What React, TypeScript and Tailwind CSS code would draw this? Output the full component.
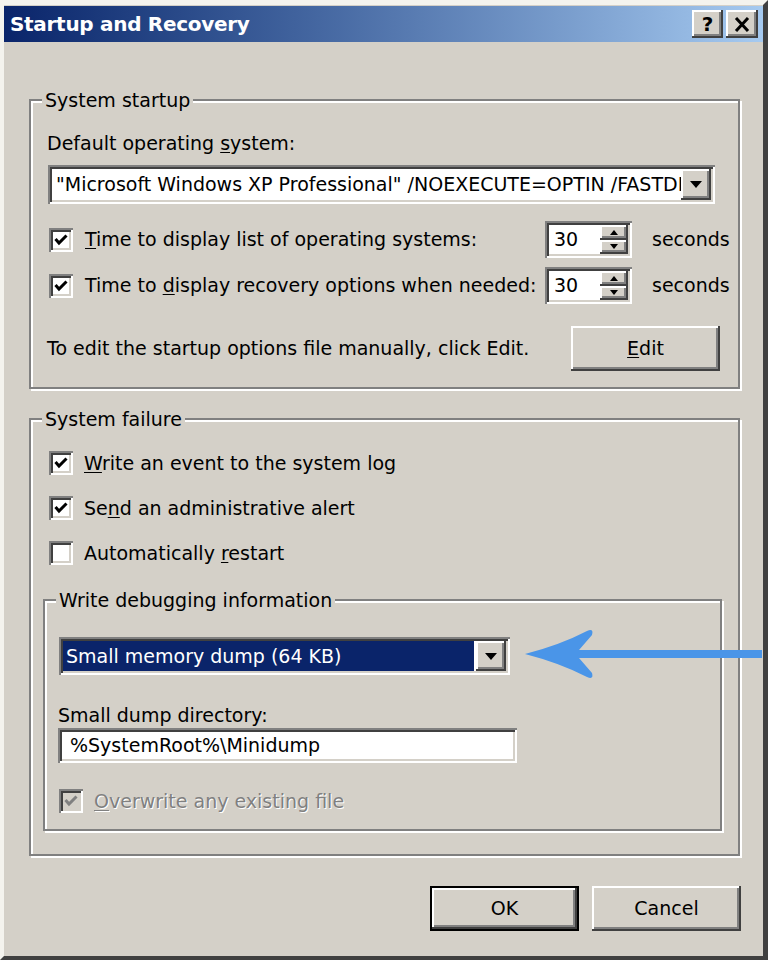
import type { ReactNode } from "react";

const raised =
  "bg-[#d4d0c8] shadow-[inset_-2px_-2px_0_#404040,inset_2px_2px_0_#ffffff,inset_-4px_-4px_0_#808080,inset_4px_4px_0_#d4d0c8]";
const sunken =
  "shadow-[inset_2px_2px_0_#808080,inset_-2px_-2px_0_#ffffff,inset_4px_4px_0_#404040,inset_-4px_-4px_0_#d4d0c8]";

function Group({
  label,
  className,
  children,
}: {
  label: string;
  className: string;
  children: ReactNode;
}) {
  return (
    <div
      className={`flex flex-col border-2 border-[#808080] shadow-[2px_2px_0_#ffffff,inset_2px_2px_0_#ffffff] ${className}`}
    >
      <div className="-mt-[13px] ml-[11px] w-fit bg-[#d4d0c8] px-[3px] leading-[24px]">
        {label}
      </div>
      {children}
    </div>
  );
}

function Check({ checked, disabled }: { checked: boolean; disabled?: boolean }) {
  return (
    <div
      className={`flex h-[24px] w-[24px] shrink-0 items-center justify-center ${sunken} ${
        disabled ? "bg-[#d4d0c8]" : "bg-white"
      }`}
    >
      {checked && (
        <svg width="16" height="16" viewBox="0 0 16 16">
          <polyline
            points="2.5,7 6,11 13.5,3.5"
            fill="none"
            stroke={disabled ? "#808080" : "#000"}
            strokeWidth="3"
          />
        </svg>
      )}
    </div>
  );
}

function Spin() {
  return (
    <div className={`flex h-[37px] w-[87px] bg-white p-[4px] ${sunken}`}>
      <div className="flex-1 pl-[5px] leading-[29px]">30</div>
      <div className="flex w-[28px] flex-col">
        <div className={`flex flex-1 items-center justify-center ${raised}`}>
          <svg width="8" height="5" viewBox="0 0 8 5">
            <polygon points="0,5 8,5 4,0" fill="#000" />
          </svg>
        </div>
        <div className={`flex flex-1 items-center justify-center ${raised}`}>
          <svg width="8" height="5" viewBox="0 0 8 5">
            <polygon points="0,0 8,0 4,5" fill="#000" />
          </svg>
        </div>
      </div>
    </div>
  );
}

function DropButton() {
  return (
    <div className={`flex w-[30px] shrink-0 items-center justify-center ${raised}`}>
      <svg width="12" height="7" viewBox="0 0 12 7">
        <polygon points="0,0 12,0 6,7" fill="#000" />
      </svg>
    </div>
  );
}

export default function App() {
  return (
    <div
      className="relative h-[960px] w-[768px] overflow-hidden text-[19px] text-black"
      style={{ fontFamily: '"DejaVu Sans", sans-serif' }}
    >
      <div className="flex h-full w-full flex-col border-b-[4px] border-l-[4px] border-r-[5px] border-t-[5px] border-b-[#404040] border-l-[#f4f3ee] border-r-[#404040] border-t-[#f4f3ee] bg-[#d4d0c8] pt-px">
        {/* title bar */}
        <div className="flex h-[36px] shrink-0 items-center bg-linear-to-r from-[#0a246a] to-[#a6caf0] pl-[6px] pr-[5px]">
          <span className="text-[20px] font-bold tracking-[-0.3px] text-white">
            Startup and Recovery
          </span>
          <div className="ml-auto flex gap-[3px]">
            <div className={`flex h-[28px] w-[31px] items-center justify-center text-[20px] font-bold leading-none ${raised}`}>
              ?
            </div>
            <div className={`flex h-[28px] w-[32px] items-center justify-center ${raised}`}>
              <svg width="16" height="15" viewBox="0 0 16 15">
                <path d="M2 1 L14 14 M14 1 L2 14" stroke="#000" strokeWidth="3" />
              </svg>
            </div>
          </div>
        </div>

        {/* System startup */}
        <Group label="System startup" className="ml-[25px] mt-[57px] w-[711px] pb-[16px]">
          <div className="ml-[16px] mt-[19px] leading-[24px]">
            Default operating <span className="underline underline-offset-2">s</span>ystem:
          </div>
          <div className={`ml-[17px] mt-[10px] flex h-[39px] w-[667px] bg-white p-[4px] ${sunken}`}>
            <div className="min-w-0 flex-1 overflow-hidden whitespace-nowrap pl-[4px] leading-[31px]">
              "Microsoft Windows XP Professional" /NOEXECUTE=OPTIN /FASTDETECT
            </div>
            <DropButton />
          </div>
          <div className="mt-[17px] flex h-[37px] items-center pl-[18px]">
            <Check checked />
            <span className="ml-[12px] w-[460px] whitespace-nowrap">
              <span className="underline underline-offset-2">T</span>ime to display list of operating systems:
            </span>
            <Spin />
            <span className="ml-[20px]">seconds</span>
          </div>
          <div className="mt-[9px] flex h-[37px] items-center pl-[18px]">
            <Check checked />
            <span className="ml-[12px] w-[460px] whitespace-nowrap">
              Time to <span className="underline underline-offset-2">d</span>isplay recovery options when needed:
            </span>
            <Spin />
            <span className="ml-[20px]">seconds</span>
          </div>
          <div className="mt-[22px] flex h-[45px] items-center pl-[16px]">
            <span className="flex-1 whitespace-nowrap">To edit the startup options file manually, click Edit.</span>
            <div className={`mr-[18px] flex h-[45px] w-[149px] shrink-0 items-center justify-center ${raised}`}>
              <span>
                <span className="underline underline-offset-2">E</span>dit
              </span>
            </div>
          </div>
        </Group>

        {/* System failure */}
        <Group label="System failure" className="ml-[25px] mt-[29px] w-[711px] pb-[23px]">
          <div className="mt-[20px] flex items-center pl-[18px]">
            <Check checked />
            <span className="ml-[11px] leading-[24px]">
              <span className="underline underline-offset-2">W</span>rite an event to the system log
            </span>
          </div>
          <div className="mt-[21px] flex items-center pl-[18px]">
            <Check checked />
            <span className="ml-[11px] leading-[24px]">
              Se<span className="underline underline-offset-2">n</span>d an administrative alert
            </span>
          </div>
          <div className="mt-[21px] flex items-center pl-[18px]">
            <Check checked={false} />
            <span className="ml-[11px] leading-[24px]">
              Automatically <span className="underline underline-offset-2">r</span>estart
            </span>
          </div>

          <Group label="Write debugging information" className="ml-[12px] mt-[34px] w-[679px] pb-[16px]">
            <div className={`ml-[14px] mt-[25px] flex h-[38px] w-[451px] bg-white p-[4px] ${sunken}`}>
              <div className="mr-[2px] min-w-0 flex-1 overflow-hidden whitespace-nowrap bg-[#0a246a] pl-[3px] leading-[30px] text-white">
                Small memory dump (64 KB)
              </div>
              <DropButton />
            </div>
            <div className="ml-[13px] mt-[28px] leading-[24px]">Small dump directory:</div>
            <div className={`ml-[13px] mt-px flex h-[35px] w-[459px] items-center bg-white px-[12px] ${sunken}`}>
              %SystemRoot%\Minidump
            </div>
            <div className="mt-[26px] flex items-center pl-[14px]">
              <Check checked disabled />
              <span className="ml-[11px] leading-[24px] text-[#808080] [text-shadow:1px_1px_0_#ffffff]">
                <span className="underline underline-offset-2">O</span>verwrite any existing file
              </span>
            </div>
          </Group>
        </Group>

        {/* buttons */}
        <div className="mt-[30px] flex justify-end gap-[13px] pr-[22px]">
          <div className="h-[45px] w-[149px] border-2 border-black">
            <div className={`flex h-full w-full items-center justify-center ${raised}`}>OK</div>
          </div>
          <div className={`flex h-[45px] w-[149px] items-center justify-center ${raised}`}>Cancel</div>
        </div>
      </div>

      {/* annotation arrow */}
      <svg
        className="pointer-events-none absolute left-0 top-0"
        width="768"
        height="960"
        viewBox="0 0 768 960"
      >
        <path
          d="M525 654 Q560 645 587 631 Q594 628 592 635 L579 650 L762 650 L762 658 L579 658 L592 673 Q594 680 587 677 Q560 663 525 654 Z"
          fill="#4a95e8"
        />
      </svg>
    </div>
  );
}
